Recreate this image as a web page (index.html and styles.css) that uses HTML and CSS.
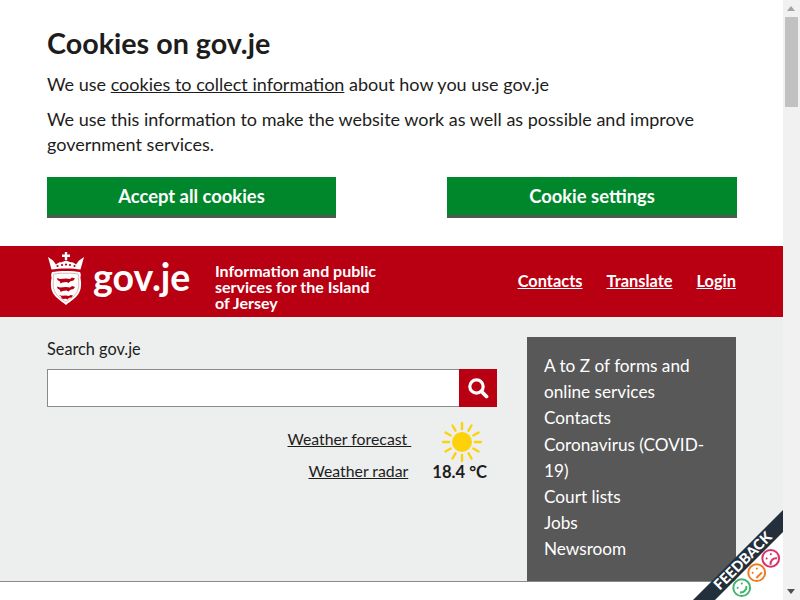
FILE: index.html
```html
<!DOCTYPE html>
<html lang="en">
<head>
  <meta charset="UTF-8">
  <title>gov.je</title>
  <link rel="stylesheet" href="styles.css">
</head>
<body>
  <div class="page">
    <!-- cookie banner -->
    <section class="cookies">
      <h2 class="cookies-title">Cookies on gov.je</h2>
      <p class="cookies-text">We use <a href="#">cookies to collect information</a> about how you use gov.je</p>
      <p class="cookies-text">We use this information to make the website work as well as possible and improve government services.</p>
      <div class="cookies-btns">
        <a class="btn" href="#">Accept all cookies</a>
        <a class="btn" href="#">Cookie settings</a>
      </div>
    </section>

    <!-- red header -->
    <header class="header">
      <a class="logo" href="#">
        <svg class="crest" width="36" height="56" viewBox="0 0 36 56">
          <!-- cross and crown -->
          <path fill="#fff" d="M16.800 0h2.400v2.600H22v2.300h-2.800v3h-2.400v-3H14V2.600h2.800z"/>
          <path fill="#fff" d="M0 5l5 3.500 3 4c2-2 4-2.500 5.500-2.300L18 8.500l4.500 1.700c1.500-.2 3.500.3 5.500 2.300l3-4L36 5l-3.500 12.500c-6-1.500-23-1.500-29 0z"/>
          <g fill="#b80012">
            <circle cx="9.500" cy="14" r="1.100"/>
            <circle cx="14" cy="13" r="1.100"/>
            <circle cx="18" cy="12.500" r="1.100"/>
            <circle cx="22" cy="13" r="1.100"/>
            <circle cx="26.500" cy="14" r="1.100"/>
          </g>
          <!-- shield -->
          <path fill="#fff" d="M4 20c6-1.500 22-1.500 28 0 1 2 1 3.500 .4 5.500 1.600 8 .6 14.500-4.400 19.500-3 3-8 6-10 8-2-2-7-5-10-8-5-5-6-11.500-4.400-19.500C3 23.500 3 22 4 20z"/>
          <path fill="none" stroke="#d9a3a3" stroke-width=".8" d="M6 22c5-1 19-1 24 0 .6 1.300 .6 2.400 .2 3.600 1.400 7.400 .6 13.400-3.800 18-2.600 2.700-6.800 5-8.400 6.600-1.600-1.600-5.800-3.900-8.400-6.600-4.400-4.600-5.200-10.600-3.800-18C5.400 24.400 5.400 23.300 6 22z"/>
          <!-- three lions -->
          <path fill="#b80012" d="M9 26l3 1 6-.5 4 .5 2-1.500 3 1-1.500 2-3 .8-2 1.700-2-1-4 .5-2 1-.5-2-2.500-1.500z"/>
          <path fill="#b80012" d="M9 34.500l3 1 6-.5 4 .5 2-1.500 3 1-1.500 2-3 .8-2 1.700-2-1-4 .5-2 1-.5-2-2.500-1.500z"/>
          <path fill="#b80012" d="M11 43l2.500 .8 4.500-.3 3 .4 1.500-1 2.500 .7-1.500 1.800-2.500 .7-1.500 1.400-1.500-.8-3 .4-1.500-1-.5-1.500z"/>
        </svg>
        <span class="logo-text">gov.je</span>
      </a>
      <p class="tagline">Information and public services for the Island of Jersey</p>
      <nav class="header-nav">
        <a href="#">Contacts</a>
        <a href="#">Translate</a>
        <a href="#">Login</a>
      </nav>
    </header>

    <!-- search and quick links -->
    <main class="content">
      <div class="search-col">
        <label class="search-label" for="q">Search gov.je</label>
        <div class="search-box">
          <input class="search-input" id="q" type="text">
          <button class="search-btn" aria-label="Search">
            <svg width="22" height="22" viewBox="0 0 22 22">
              <circle cx="9.500" cy="9.500" r="6.700" fill="none" stroke="#fff" stroke-width="3.200"/>
              <path d="M14.500 14.500l5 5" stroke="#fff" stroke-width="3.800" stroke-linecap="round"/>
            </svg>
          </button>
        </div>
        <div class="weather">
          <div class="weather-links">
            <a class="forecast-link" href="#">Weather forecast&nbsp;</a>
            <a href="#">Weather radar</a>
          </div>
          <div class="weather-now">
            <svg class="sun" width="40" height="40" viewBox="0 0 40 40">
              <circle cx="20" cy="20" r="10" fill="#fdd20a"/>
              <g stroke="#fdd20a" stroke-width="2.400" stroke-linecap="round">
                <path d="M20 1v6M20 33v6M1 20h6M33 20h6"/>
                <path d="M10.500 3.500l3 5.200M26.500 31.300l3 5.200M3.500 10.500l5.200 3M31.300 26.500l5.200 3"/>
                <path d="M29.500 3.500l-3 5.200M13.500 31.300l-3 5.200M36.500 10.500l-5.200 3M8.700 26.500l-5.200 3"/>
              </g>
            </svg>
            <span class="temp">18.4 °C</span>
          </div>
        </div>
      </div>
      <ul class="quick-links">
        <li><a href="#">A to Z of forms and online services</a></li>
        <li><a href="#">Contacts</a></li>
        <li><a href="#">Coronavirus (COVID-19)</a></li>
        <li><a href="#">Court lists</a></li>
        <li><a href="#">Jobs</a></li>
        <li><a href="#">Newsroom</a></li>
      </ul>
    </main>
    <div class="below"></div>

    <!-- feedback ribbon, sits over the page corner -->
    <a class="feedback" href="#">
      <svg class="ribbon" width="92" height="92" viewBox="0 0 92 92">
        <path fill="#fff" d="M92 24v68H24z"/>
        <path fill="#232f3a" d="M92 2v22L24 92H2z"/>
        <g fill="#fff" stroke-width="2">
          <g stroke="#3fb56f" transform="translate(50.700 79.700) rotate(-45)">
            <circle r="8.400"/>
            <path fill="none" d="M-4.500 2c2 3.200 7 3.200 9 0"/>
            <path d="M-3-2.800h.1M3-2.800h.1" stroke-linecap="round"/>
          </g>
          <g stroke="#ee7a22" transform="translate(65.700 64.700) rotate(-45)">
            <circle r="8.400"/>
            <path d="M-4 3.500h8"/>
            <path d="M-3-2.800h.1M3-2.800h.1" stroke-linecap="round"/>
          </g>
          <g stroke="#d8316b" transform="translate(79.700 50.300) rotate(-45)">
            <circle r="8.400"/>
            <path fill="none" d="M-4.500 4.500c2-3.200 7-3.200 9 0"/>
            <path d="M-3-2.800h.1M3-2.800h.1" stroke-linecap="round"/>
          </g>
        </g>
      </svg>
      <span class="feedback-text">FEEDBACK</span>
    </a>
  </div>

  <!-- scrollbar -->
  <div class="scrollbar">
    <div class="scroll-up"></div>
    <div class="scroll-thumb"></div>
    <div class="scroll-track"></div>
    <div class="scroll-down"></div>
  </div>
</body>
</html>
```

FILE: styles.css
```css
html, body {
  margin: 0;
  height: 100%;
  overflow: hidden;
}

body {
  display: flex;
  font-family: Lato, "Liberation Sans", sans-serif;
  font-size: 18px;
  color: #1d1d1b;
  background: #fff;
}

a { color: inherit; }

.page {
  position: relative;
  flex: 1;
  min-width: 0;
  height: 600px;
  overflow: hidden;
}

/* cookie banner */
.cookies {
  height: 246px;
  box-sizing: border-box;
  padding: 27px 46px 0 47px;
}

.cookies-title {
  margin: 0 0 13px;
  font-size: 28.7px;
  line-height: 32px;
  font-weight: 700;
}

.cookies-text {
  margin: 0 0 10px;
  line-height: 25px;
}

.cookies-btns {
  display: flex;
  justify-content: space-between;
  margin-top: 20px;
}

.btn {
  box-sizing: border-box;
  width: 289px;
  height: 41px;
  line-height: 38px;
  text-align: center;
  text-decoration: none;
  font-size: 18.4px;
  font-weight: 700;
  color: #fff;
  background: #00872b;
  border-bottom: 3px solid #4f5a52;
}

.btn:last-child { width: 290px; }

/* header */
.header {
  display: flex;
  align-items: center;
  height: 71px;
  box-sizing: border-box;
  padding: 0 47px 0 48px;
  color: #fff;
  background: #b80012;
}

.logo {
  display: flex;
  align-items: center;
  gap: 9px;
  width: 167px;
  text-decoration: none;
}

.crest { margin-top: -3px; }

.logo-text {
  margin-top: -10px;
  font-size: 37.5px;
  font-weight: 700;
}

.tagline {
  width: 165px;
  margin: 11px 0 0;
  font-size: 16px;
  line-height: 16px;
  font-weight: 700;
}

.header-nav {
  display: flex;
  gap: 24px;
  margin: -2px 0 0 auto;
  font-size: 16.4px;
  font-weight: 700;
}

/* main area */
.content {
  display: flex;
  justify-content: space-between;
  height: 265px;
  box-sizing: border-box;
  padding: 20px 47px 0;
  background: #edeeee;
  border-bottom: 1px solid #8a8a8a;
}

.search-col { width: 450px; }

.search-label {
  display: block;
  font-size: 16.3px;
  line-height: 24px;
}

.search-box {
  display: flex;
  height: 38px;
  margin-top: 8px;
}

.search-input {
  flex: 1;
  min-width: 0;
  box-sizing: border-box;
  border: 1px solid #8a8a8a;
  border-right: 0;
  background: #fff;
}

.search-btn {
  display: flex;
  align-items: center;
  justify-content: center;
  width: 38px;
  padding: 0;
  border: 0;
  background: #b80012;
}

.weather {
  display: flex;
  justify-content: flex-end;
  gap: 24px;
  margin-top: 15px;
  padding-right: 10px;
}

.weather-links {
  display: flex;
  flex-direction: column;
  align-items: flex-end;
  gap: 12px;
  padding-top: 7px;
  font-size: 15.8px;
  line-height: 20px;
}

.forecast-link { margin-right: -3px; }

.weather-now {
  display: flex;
  flex-direction: column;
  align-items: center;
}

.sun { margin-left: 5px; }

.temp {
  font-size: 16.6px;
  line-height: 20px;
  font-weight: 700;
}

.quick-links {
  width: 209px;
  height: 244px;
  box-sizing: border-box;
  margin: 0;
  padding: 16px 16px 0 17px;
  list-style: none;
  color: #fff;
  background: #585858;
  font-size: 17.2px;
  line-height: 26.2px;
}

.quick-links a { text-decoration: none; }

.below { height: 18px; }

/* feedback ribbon */
.feedback {
  position: absolute;
  right: 0;
  bottom: 0;
  width: 92px;
  height: 92px;
  text-decoration: none;
}

.ribbon { display: block; }

.feedback-text {
  position: absolute;
  left: 14px;
  top: 44px;
  font-size: 14.5px;
  font-weight: 900;
  color: #fff;
  transform: rotate(-45deg);
}

/* fake scrollbar */
.scrollbar {
  display: flex;
  flex-direction: column;
  flex: none;
  width: 17px;
  height: 600px;
  background: #f1f1f1;
}

.scroll-up, .scroll-down {
  position: relative;
  height: 17px;
}

.scroll-up::after, .scroll-down::after {
  content: '';
  position: absolute;
  left: 4px;
  top: 6px;
  border: 4.5px solid transparent;
  border-top: 0;
  border-bottom: 5px solid #a3a3a3;
}

.scroll-down::after {
  border-bottom: 0;
  border-top: 5px solid #505050;
}

.scroll-thumb {
  height: 90px;
  margin: 0 2px;
  background: #c1c1c1;
}

.scroll-track { flex: 1; }
```
